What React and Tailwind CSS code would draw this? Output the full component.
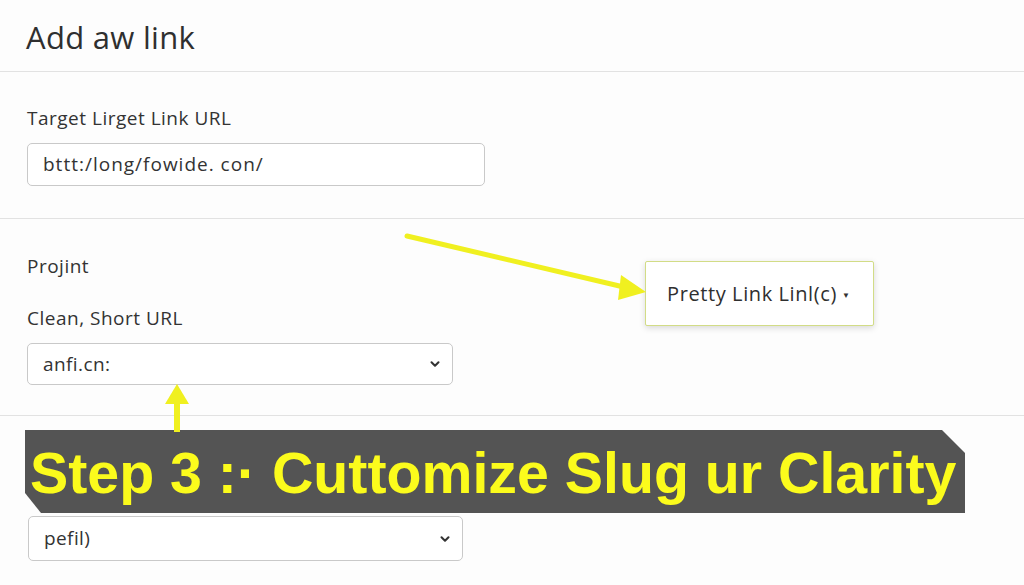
import React from "react";
import { ChevronDown } from "lucide-react";

const font = { fontFamily: '"Open Sans", "Noto Sans", sans-serif' };

const Select = ({ value, className, textClass = "" }) => (
  <div
    className={`flex items-center justify-between border border-[#c9c9c9] rounded-[5px] bg-white pl-[15px] pr-[10px] ${className}`}
  >
    <span className={`text-[19px] tracking-[0.4px] text-[#333] ${textClass}`}>{value}</span>
    <ChevronDown className="h-[14px] w-[14px] text-[#333]" strokeWidth={3.5} />
  </div>
);

export default function App() {
  return (
    <div
      className="relative w-[1024px] h-[585px] overflow-hidden bg-[#fdfdfd] text-[#333]"
      style={font}
    >
      {/* header */}
      <div className="h-[72px] flex items-center px-[26px] border-b border-[#e2e2e2]">
        <h1 className="text-[31px] leading-none text-[#2f2f2f] pt-[4px] tracking-[0.3px]">Add aw link</h1>
      </div>

      {/* target url */}
      <div className="pt-[34px] pb-[32px] px-[27px] border-b border-[#e2e2e2]">
        <label className="block text-[19px] leading-[24px] tracking-[0.5px]">Target Lirget Link URL</label>
        <div className="mt-[13px] w-[458px] h-[43px] flex items-center px-[15px] border border-[#c9c9c9] rounded-[5px] bg-white text-[19px] tracking-[1px]">
          bttt:/long/fowide. con/
        </div>
      </div>

      {/* short url */}
      <div className="relative pt-[35px] pb-[30px] px-[27px] border-b border-[#e2e2e2]">
        <div className="text-[19px] leading-[24px] tracking-[0.5px]">Projint</div>
        <div className="mt-[28px] text-[19px] leading-[24px] tracking-[0.5px]">Clean, Short URL</div>
        <Select value="anfi.cn:" className="mt-[13px] w-[426px] h-[42px]" />

        <div className="absolute left-[645px] top-[42px] w-[229px] h-[65px] flex items-center pl-[21px] gap-[5px] bg-white border border-[#d2dc86] rounded-[2px] shadow-[0_2px_6px_rgba(0,0,0,0.15)]">
          <span className="text-[20px] text-[#2f2f2f] tracking-[0.6px]">Pretty Link Linl(c)</span>
          <span className="text-[8px] text-[#333] mt-[2px]">▼</span>
        </div>
      </div>

      {/* banner */}
      <div className="mt-[14px] ml-[25px] w-[940px] h-[83px] bg-[#545454] flex items-center pl-[5px] pt-[4px] [clip-path:polygon(0_0,calc(100%-23px)_0,100%_23px,100%_100%,16px_100%,0_calc(100%-20px))]">
        <span
          className="text-[57.3px] font-bold text-[#fbfb1c] leading-none whitespace-nowrap"
          style={{ fontFamily: '"Liberation Sans", Arial, sans-serif' }}
        >
          Step 3 :· Cuttomize Slug ur Clarity
        </span>
      </div>

      <Select value="pefil)" className="mt-[3px] ml-[28px] w-[435px] h-[45px]" />

      {/* annotation arrows */}
      <svg className="absolute left-0 top-0 pointer-events-none" width="1024" height="585">
        <line x1="407" y1="236" x2="628" y2="288" stroke="#f0f020" strokeWidth="5" strokeLinecap="round" />
        <polygon points="646,292 621,275 618,300" fill="#f0f020" />
        <line x1="177" y1="432" x2="177" y2="398" stroke="#f0f020" strokeWidth="6" />
        <polygon points="177,384 165,404 189,404" fill="#f0f020" />
      </svg>
    </div>
  );
}
